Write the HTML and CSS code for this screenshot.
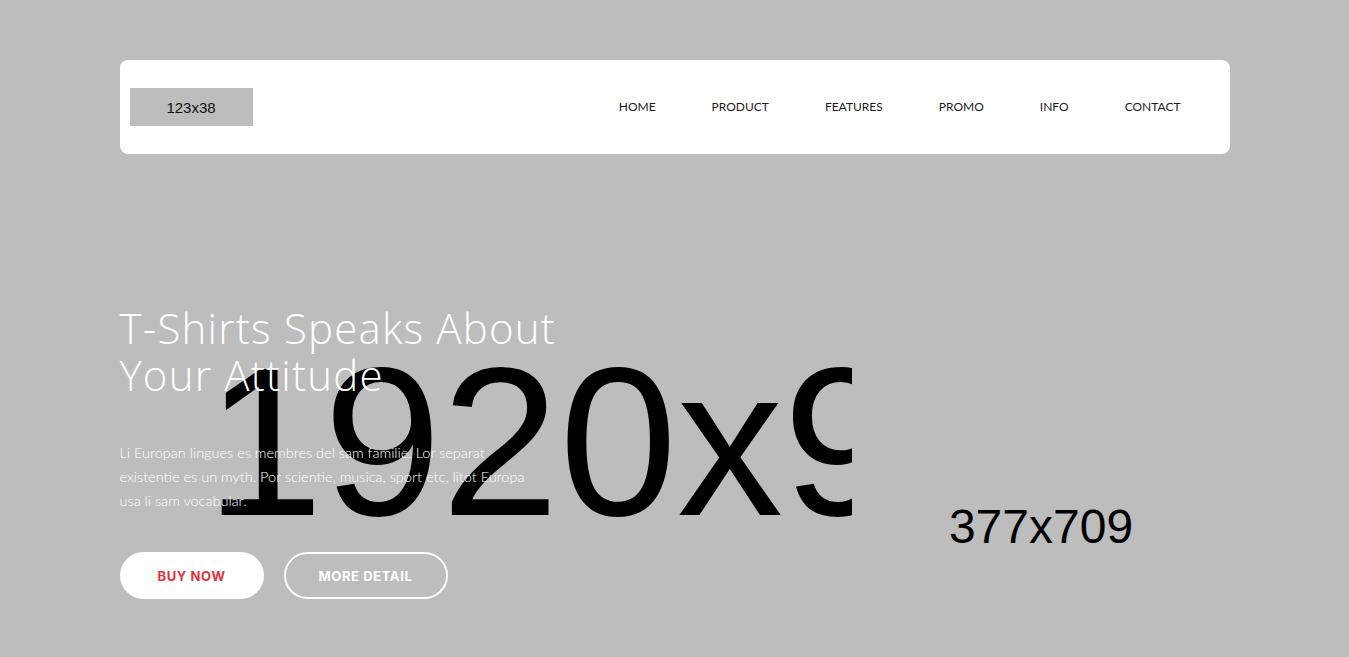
FILE: index.html
```html
<!DOCTYPE html>
<html lang="en">
<head>
<meta charset="utf-8">
<title>T-Shirts</title>
<link rel="stylesheet" href="styles.css">
</head>
<body>
<div class="container">
  <header class="topbar">
    <div class="logo">123x38</div>
    <nav class="menu">
      <a href="#">HOME</a>
      <a href="#">PRODUCT</a>
      <a href="#">FEATURES</a>
      <a href="#">PROMO</a>
      <a href="#">INFO</a>
      <a href="#">CONTACT</a>
    </nav>
  </header>
  <section class="hero">
    <div class="hero-bg"><span>1920x900</span></div>
    <div class="hero-text">
      <h1 class="title">T-Shirts Speaks About<br>Your Attitude</h1>
      <p class="lead">Li Europan lingues es membres del sam familie. Lor separat existentie es un myth. Por scientie, musica, sport etc, litot Europa usa li sam vocabular.</p>
      <div class="actions">
        <a href="#" class="btn btn-solid">BUY NOW</a>
        <a href="#" class="btn btn-outline">MORE DETAIL</a>
      </div>
    </div>
    <div class="hero-img">377x709</div>
  </section>
</div>
</body>
</html>
```
FILE: styles.css
```css
html, body {
  margin: 0;
  padding: 0;
}
body {
  background: #bdbdbd;
  font-family: "Liberation Sans", Arial, sans-serif;
  overflow: hidden;
}
.container {
  width: 1110px;
  margin: 0 auto;
  padding-top: 60px;
}
.topbar {
  height: 94px;
  background: #fff;
  border-radius: 8px;
  display: flex;
  align-items: center;
  justify-content: space-between;
  padding: 0 21px 0 10px;
  box-sizing: border-box;
}
.logo {
  width: 123px;
  height: 38px;
  background: #bdbdbd;
  color: #111;
  font-family: "Liberation Sans", Arial, sans-serif;
  font-size: 15px;
  display: flex;
  align-items: center;
  justify-content: center;
}
.menu {
  display: flex;
  margin-top: -2px;
}
.menu a {
  font-family: Lato, sans-serif;
  font-size: 12px;
  color: #1c1c1c;
  text-decoration: none;
  padding: 0 28px;
}
.hero {
  position: relative;
  display: flex;
  margin-top: 18px;
}
.hero-bg {
  position: absolute;
  left: 0;
  top: 164px;
  width: 732px;
  overflow: hidden;
  font-size: 212px;
  line-height: 1;
  color: #000;
  white-space: nowrap;
  padding-left: 86px;
  box-sizing: border-box;
  z-index: 0;
}
.hero-text {
  position: relative;
  z-index: 1;
  flex: 1;
  padding-top: 132px;
}
.title {
  margin: 0;
  font-family: "Open Sans", sans-serif;
  font-weight: 300;
  font-size: 42px;
  line-height: 47px;
  color: #fff;
  letter-spacing: 1.2px;
}
.lead {
  margin: 43px 0 0;
  width: 420px;
  font-family: Lato, sans-serif;
  font-weight: 300;
  font-size: 14.5px;
  line-height: 24px;
  color: #fff;
}
.actions {
  display: flex;
  gap: 20px;
  margin-top: 39px;
}
.btn {
  height: 47px;
  border-radius: 24px;
  display: flex;
  align-items: center;
  justify-content: center;
  font-family: Inter, sans-serif;
  font-weight: 700;
  font-size: 13px;
  letter-spacing: 0.6px;
  text-decoration: none;
  box-sizing: border-box;
}
.btn-solid {
  width: 144px;
  background: #fff;
  color: #e4313c;
}
.btn-outline {
  width: 164px;
  border: 2px solid #fff;
  color: #fff;
}
.hero-img {
  position: relative;
  z-index: 1;
  width: 377px;
  height: 709px;
  display: flex;
  align-items: center;
  justify-content: center;
  font-family: "Liberation Sans", Arial, sans-serif;
  font-size: 48px;
  color: #000;
}
```
